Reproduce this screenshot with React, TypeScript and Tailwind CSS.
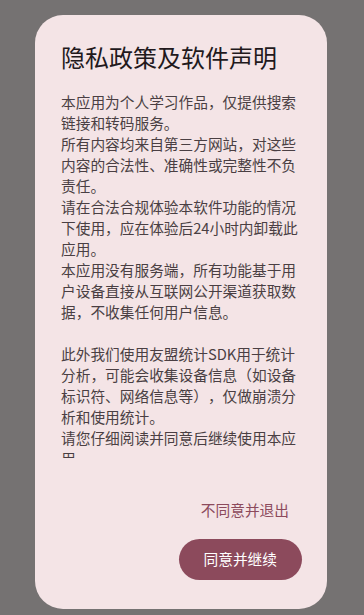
import React from "react";

const paragraphs = [
  "本应用为个人学习作品，仅提供搜索链接和转码服务。",
  "所有内容均来自第三方网站，对这些内容的合法性、准确性或完整性不负责任。",
  "请在合法合规体验本软件功能的情况下使用，应在体验后24小时内卸载此应用。",
  "本应用没有服务端，所有功能基于用户设备直接从互联网公开渠道获取数据，不收集任何用户信息。",
  "",
  "此外我们使用友盟统计SDK用于统计分析，可能会收集设备信息（如设备标识符、网络信息等），仅做崩溃分析和使用统计。",
  "请您仔细阅读并同意后继续使用本应用。",
];

const font = { fontFamily: '"Noto Sans CJK SC", "Noto Sans", Roboto, sans-serif' };

export default function App() {
  return (
    <div className="w-[364px] h-[615px] bg-[#757272] pt-[15px] pl-[35px]" style={font}>
      <div className="w-[292px] h-[594px] rounded-[28px] bg-[#f4e4e6] flex flex-col pt-[26px] pb-[29px]">
        <h1 className="px-[26px] text-[24px] leading-[32px] text-[#22191c] font-normal">
          隐私政策及软件声明
        </h1>
        <div className="mt-[18px] pl-[26px] pr-[22px] h-[367px] overflow-hidden text-[14.7px] leading-[21px] text-[#4a3f43] [text-spacing-trim:space-all]">
          {paragraphs.map((p, i) => (
            <p key={i} className="min-h-[21px]">
              {p}
            </p>
          ))}
        </div>
        <div className="mt-[32px] flex flex-col items-end pr-[25px]">
          <button className="h-10 px-3 mr-[1px] text-[14.7px] text-[#8c4a5c] rounded-full">
            不同意并退出
          </button>
          <button className="mt-[9px] h-[41px] px-[25px] rounded-full bg-[#8c4a5c] text-white text-[14.7px]">
            同意并继续
          </button>
        </div>
      </div>
    </div>
  );
}
